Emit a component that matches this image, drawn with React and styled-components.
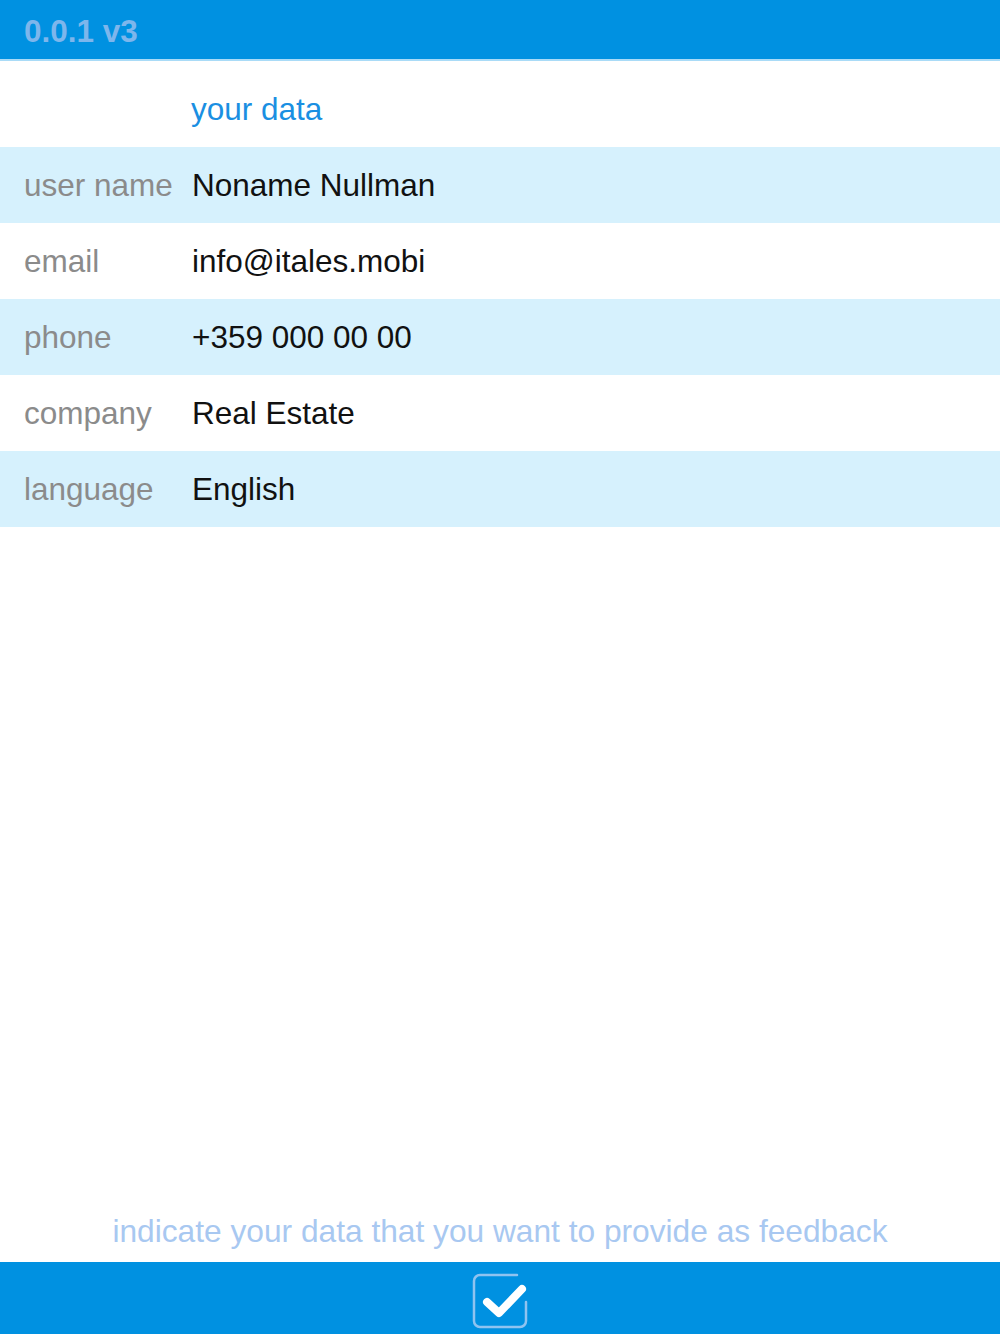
import React from 'react';
import styled, { createGlobalStyle } from 'styled-components';

const GlobalStyle = createGlobalStyle`
    html, body {
        margin: 0;
        padding: 0;
        background: #fff;
    }
    body {
        font-family: "Liberation Sans", Arial, sans-serif;
    }
`;

const Page = styled.div`
    min-height: 1334px;
    display: flex;
    flex-direction: column;
`;

const Header = styled.header`
    height: 61px;
    background-color: #0091e1;
    border-bottom: 2px solid #a9dbf7;
    box-sizing: border-box;
    display: flex;
    align-items: center;
    padding: 4px 0 0 24px;
`;

const Version = styled.div`
    font-size: 31.5px;
    font-weight: bold;
    color: #7db6ec;
`;

const SectionTitle = styled.div`
    height: 86px;
    display: flex;
    align-items: center;
    padding: 10px 0 0 191px;
    font-size: 31.5px;
    color: #1a8fe2;
    box-sizing: border-box;
`;

const Row = styled.div`
    height: 76px;
    display: flex;
    align-items: center;
    font-size: 31.5px;
    background-color: ${(p) => (p.$shaded ? '#d6f1fd' : '#fff')};
`;

const Label = styled.div`
    width: 168px;
    padding-left: 24px;
    color: #8b8b8b;
`;

const Value = styled.div`
    color: #111;
`;

const Spacer = styled.div`
    flex: 1;
`;

const Hint = styled.div`
    text-align: center;
    font-size: 31.7px;
    color: #a8c8f1;
    padding-bottom: 12px;
`;

const Footer = styled.footer`
    height: 72px;
    background-color: #0091e1;
    display: flex;
    align-items: center;
    justify-content: center;
`;

const rows = [
    ['user name', 'Noname Nullman'],
    ['email', 'info@itales.mobi'],
    ['phone', '+359 000 00 00'],
    ['company', 'Real Estate'],
    ['language', 'English'],
];

function CheckIcon() {
    return (
        <svg width="60" height="60" viewBox="0 0 60 60" style={{ marginTop: 4 }}>
            <path
                d="M47 5 H10 a6 6 0 0 0 -6 6 V51 a6 6 0 0 0 6 6 H50 a6 6 0 0 0 6 -6 V32"
                fill="none"
                stroke="#8fc3f0"
                strokeWidth="2.5"
                strokeLinecap="round"
            />
            <path
                d="M17 32 L29 43 L52 19"
                fill="none"
                stroke="#fff"
                strokeWidth="8"
                strokeLinecap="round"
                strokeLinejoin="round"
            />
        </svg>
    );
}

function App() {
    return (
        <Page>
            <GlobalStyle />
            <Header>
                <Version>0.0.1 v3</Version>
            </Header>
            <SectionTitle>your data</SectionTitle>
            {rows.map(([label, value], i) => (
                <Row key={label} $shaded={i % 2 === 0}>
                    <Label>{label}</Label>
                    <Value>{value}</Value>
                </Row>
            ))}
            <Spacer />
            <Hint>indicate your data that you want to provide as feedback</Hint>
            <Footer>
                <CheckIcon />
            </Footer>
        </Page>
    );
}

export default App;
